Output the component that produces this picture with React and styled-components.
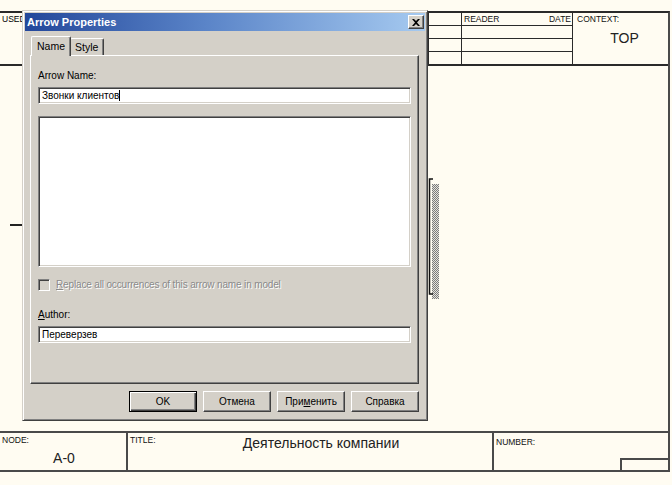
import styled, { createGlobalStyle } from "styled-components";

const GlobalStyle = createGlobalStyle`
  body {
    margin: 0;
    background: #fffcf2;
    font-family: "Liberation Sans", Arial, sans-serif;
  }
`;

const INK = "#2a2a2a";

const Page = styled.div`
  position: relative;
  width: 672px;
  height: 485px;
  overflow: hidden;
  box-sizing: border-box;
  padding-top: 11px;
  background: #fffcf2;
`;

const Frame = styled.div`
  width: 670px;
  height: 461px;
  box-sizing: border-box;
  border-top: 2px solid ${INK};
  border-right: 2px solid #4a4a4a;
  border-bottom: 2px solid #4a4a4a;
  display: flex;
  flex-direction: column;
`;

const Header = styled.div`
  height: 53px;
  box-sizing: border-box;
  border-bottom: 2px solid ${INK};
  display: flex;
`;

const UsedAt = styled.div`
  width: 428px;
  padding: 2px 0 0 2px;
  box-sizing: border-box;
`;

const Clip = styled.div`
  width: 20px;
  overflow: hidden;
  white-space: nowrap;
  font-size: 8.5px;
  line-height: 9px;
`;

const RowStack = styled.div`
  width: ${({ $w }) => $w}px;
  border-left: 1px solid ${INK};
  display: flex;
  flex-direction: column;
`;

const Row = styled.div`
  height: 12px;
  border-bottom: ${({ $last }) => ($last ? "none" : `1px solid ${INK}`)};
  display: flex;
  justify-content: space-between;
  align-items: flex-start;
  padding: 2px 1px 0 2px;
`;

const Context = styled.div`
  flex: 1;
  border-left: 1px solid ${INK};
  padding: 2px 0 0 4px;
  display: flex;
  flex-direction: column;
`;

const Tiny = styled.span`
  font-size: 8.5px;
  line-height: 9px;
  color: #111;
  white-space: nowrap;
  margin-top: ${({ $mt }) => $mt || 0}px;
`;

const Big = styled.div`
  font-size: 14px;
  line-height: 16px;
  color: #222;
  text-align: center;
  margin-top: ${({ $mt }) => $mt || 0}px;
  padding-left: ${({ $pl }) => $pl || 0}px;
`;

const Middle = styled.div`
  flex: 1;
  position: relative;
`;

const Dash = styled.div`
  position: absolute;
  left: 10px;
  top: 158px;
  width: 12px;
  height: 2px;
  background: #222;
`;

const Bracket = styled.svg`
  position: absolute;
  left: 428px;
  top: 112px;
`;

const Footer = styled.div`
  height: 37px;
  border-top: 2px solid #4a4a4a;
  display: grid;
  grid-template-columns: 126px 366px 1fr;
`;

const FootCell = styled.div`
  border-left: ${({ $first }) => ($first ? "none" : "2px solid #4a4a4a")};
  padding: 3px 0 0 2px;
  display: flex;
  flex-direction: column;
`;

const NumBox = styled.div`
  margin-top: auto;
  align-self: flex-end;
  width: 46px;
  height: 10px;
  border-top: 2px solid #4a4a4a;
  border-left: 2px solid #4a4a4a;
`;

/* ---------- dialog ---------- */

const Dialog = styled.div`
  position: absolute;
  left: 22px;
  top: 10px;
  width: 406px;
  height: 411px;
  box-sizing: border-box;
  background: #d4d0c8;
  border: 1px solid;
  border-color: #d4d0c8 #404040 #404040 #d4d0c8;
  box-shadow: inset 1px 1px #fff, inset -1px -1px #808080;
  padding: 2px;
  display: flex;
  flex-direction: column;
  font-family: "Liberation Sans", Arial, sans-serif;
  font-size: 10px;
  color: #000;
`;

const TitleBar = styled.div`
  height: 18px;
  background: linear-gradient(to right, #23479a, #5a84c8 45%, #a6caf0);
  display: flex;
  align-items: center;
  justify-content: space-between;
  padding: 0 1px 0 2px;
`;

const TitleText = styled.span`
  color: #fff;
  font-weight: bold;
  font-size: 11px;
`;

const CloseBtn = styled.div`
  width: 14px;
  height: 12px;
  background: #d4d0c8;
  border: 1px solid;
  border-color: #fff #404040 #404040 #fff;
  box-shadow: inset -1px -1px #808080;
  display: flex;
  align-items: center;
  justify-content: center;
`;

const Body = styled.div`
  flex: 1;
  padding: 6px 6px 0 5px;
  display: flex;
  flex-direction: column;
`;

const TabsRow = styled.div`
  height: 19px;
  display: flex;
  align-items: flex-end;
  padding-left: 1px;
  position: relative;
  z-index: 1;
  margin-bottom: -1px;
`;

const Tab = styled.div`
  height: ${({ $active }) => ($active ? 20 : 17)}px;
  box-sizing: border-box;
  padding: ${({ $active }) => ($active ? "3px 5px 0 5px" : "2px 5px 0 4px")};
  margin-bottom: ${({ $active }) => ($active ? "0" : "1px")};
  margin-right: ${({ $active }) => ($active ? "-1px" : "0")};
  background: #d4d0c8;
  border-top: 1px solid #fff;
  border-left: 1px solid #fff;
  border-right: 1px solid #404040;
  border-radius: 2px 2px 0 0;
  box-shadow: inset -1px 0 #808080;
  font-size: 10.5px;
  z-index: ${({ $active }) => ($active ? 2 : 1)};
`;

const Panel = styled.div`
  height: 329px;
  box-sizing: border-box;
  border: 1px solid;
  border-color: #fff #404040 #404040 #fff;
  box-shadow: inset -1px -1px #808080;
  padding: 14px 0 0 7px;
  display: flex;
  flex-direction: column;
`;

const Label = styled.div`
  height: 12px;
  line-height: 12px;
  margin-top: ${({ $mt }) => $mt || 0}px;
  margin-bottom: 5px;
`;

const Field = styled.div`
  width: 373px;
  height: ${({ $h }) => $h || 17}px;
  box-sizing: border-box;
  background: #fff;
  border: 1px solid;
  border-color: #808080 #fff #fff #808080;
  box-shadow: inset 1px 1px #404040, inset -1px -1px #d4d0c8;
  padding: 0 3px;
  line-height: 15px;
  margin-top: ${({ $mt }) => $mt || 0}px;
  display: flex;
  align-items: center;
`;

const Caret = styled.span`
  display: inline-block;
  width: 1px;
  height: 11px;
  background: #000;
`;

const CheckRow = styled.div`
  margin-top: 11px;
  height: 13px;
  display: flex;
  align-items: center;
  gap: 6px;
`;

const CheckBox = styled.div`
  width: 12px;
  height: 12px;
  box-sizing: border-box;
  background: #d4d0c8;
  border: 1px solid;
  border-color: #808080 #fff #fff #808080;
  box-shadow: inset 1px 1px #404040, inset -1px -1px #d4d0c8;
`;

const Disabled = styled.span`
  color: #8a8a8a;
  text-shadow: 1px 1px 0 #fff;
  letter-spacing: -0.15px;
`;

const U = styled.span`
  text-decoration: underline;
`;

const Buttons = styled.div`
  margin-top: 7px;
  display: flex;
  justify-content: flex-end;
  gap: 6px;
`;

const Button = styled.div`
  width: 68px;
  height: 21px;
  box-sizing: border-box;
  background: #d4d0c8;
  border: 1px solid;
  border-color: ${({ $default }) =>
    $default ? "#000" : "#fff #404040 #404040 #fff"};
  box-shadow: ${({ $default }) =>
    $default
      ? "inset 1px 1px #fff, inset -1px -1px #404040, inset -2px -2px #808080"
      : "inset -1px -1px #808080"};
  display: flex;
  align-items: center;
  justify-content: center;
  font-size: 10px;
`;

export default function App() {
  return (
    <Page>
      <GlobalStyle />
      <Frame>
        <Header>
          <UsedAt>
            <Clip>USED AT:</Clip>
          </UsedAt>
          <RowStack $w={32}>
            <Row />
            <Row />
            <Row />
            <Row $last />
          </RowStack>
          <RowStack $w={110}>
            <Row>
              <Tiny>READER</Tiny>
              <Tiny>DATE</Tiny>
            </Row>
            <Row />
            <Row />
            <Row $last />
          </RowStack>
          <Context>
            <Tiny>CONTEXT:</Tiny>
            <Big $mt={6} $pl={4}>TOP</Big>
          </Context>
        </Header>
        <Middle>
          <Dash />
          <Bracket width="12" height="122" viewBox="0 0 12 122">
            <defs>
              <pattern id="hatch" width="2" height="2" patternUnits="userSpaceOnUse">
                <rect width="2" height="2" fill="#e4e2dc" />
                <rect width="1" height="1" fill="#7a7a7a" />
                <rect x="1" y="1" width="1" height="1" fill="#7a7a7a" />
              </pattern>
            </defs>
            <rect x="4" y="6" width="7" height="115" fill="url(#hatch)" />
            <path d="M5 1 H1.5 V116 H5" fill="none" stroke="#111" strokeWidth="1.5" />
          </Bracket>
        </Middle>
        <Footer>
          <FootCell $first>
            <Tiny>NODE:</Tiny>
            <Big $mt={5}>A-0</Big>
          </FootCell>
          <FootCell>
            <Tiny>TITLE:</Tiny>
            <Big $mt={-10} $pl={20}>Деятельность компании</Big>
          </FootCell>
          <FootCell>
            <Tiny $mt={2}>NUMBER:</Tiny>
            <NumBox />
          </FootCell>
        </Footer>
      </Frame>

      <Dialog>
        <TitleBar>
          <TitleText>Arrow Properties</TitleText>
          <CloseBtn>
            <svg width="8" height="7" viewBox="0 0 8 7">
              <path d="M0 0 L2 0 L4 2 L6 0 L8 0 L5 3.5 L8 7 L6 7 L4 5 L2 7 L0 7 L3 3.5 Z" fill="#000" />
            </svg>
          </CloseBtn>
        </TitleBar>
        <Body>
          <TabsRow>
            <Tab $active>Name</Tab>
            <Tab>Style</Tab>
          </TabsRow>
          <Panel>
            <Label>Arrow Name:</Label>
            <Field>
              Звонки клиентов
              <Caret />
            </Field>
            <Field $h={151} $mt={12} />
            <CheckRow>
              <CheckBox />
              <Disabled>
                <U>R</U>eplace all occurrences of this arrow name in model
              </Disabled>
            </CheckRow>
            <Label $mt={18}>
              <U>A</U>uthor:
            </Label>
            <Field>Переверзев</Field>
          </Panel>
          <Buttons>
            <Button $default>OK</Button>
            <Button>Отмена</Button>
            <Button>
              При<U>м</U>енить
            </Button>
            <Button>Справка</Button>
          </Buttons>
        </Body>
      </Dialog>
    </Page>
  );
}
